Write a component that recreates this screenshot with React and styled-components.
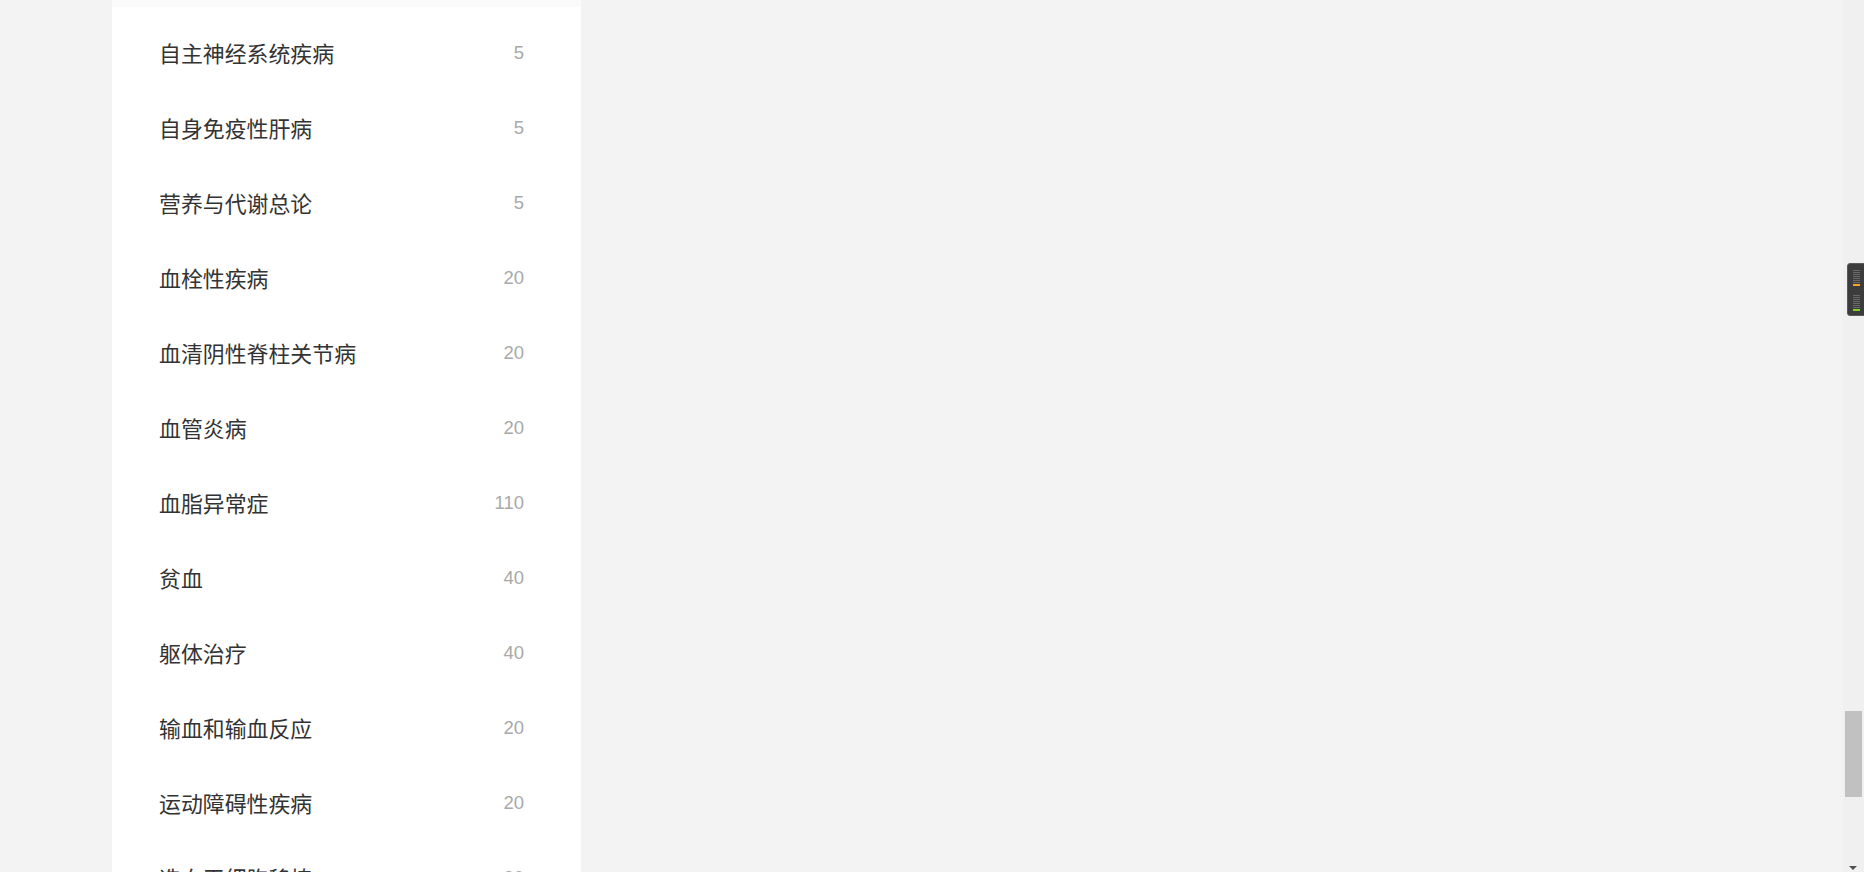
import React from 'react';
import styled, { createGlobalStyle } from 'styled-components';

const GlobalStyle = createGlobalStyle`
  html, body {
    margin: 0;
    padding: 0;
    height: 100%;
    overflow: hidden;
    background: #f3f3f3;
    font-family: "Liberation Sans", "Noto Sans CJK SC", sans-serif;
  }
`;

const Page = styled.div`
  position: relative;
  height: 872px;
  padding-left: 112px;
  display: flex;
`;

const Panel = styled.aside`
  width: 469px;
  height: 100%;
  background: linear-gradient(#fafafa 0, #fafafa 7px, #fff 7px);
  padding-top: 15px;
  box-sizing: border-box;
  overflow: hidden;
`;

const Row = styled.div`
  height: 75px;
  display: flex;
  align-items: center;
  justify-content: space-between;
  padding: 0 57px 0 47px;
  cursor: pointer;
`;

const Name = styled.span`
  font-family: "Noto Sans CJK SC", "Liberation Sans", sans-serif;
  font-size: 21.9px;
  color: #333;
`;

const Count = styled.span`
  font-family: "Liberation Sans", Arial, sans-serif;
  font-size: 18.5px;
  color: #a9a9a9;
  padding-top: 1px;
`;

const Scrollbar = styled.div`
  position: absolute;
  top: 0;
  right: 0;
  width: 21px;
  height: 100%;
  background: #f0f0f0;
`;

const Thumb = styled.div`
  position: absolute;
  left: 2px;
  right: 2px;
  top: 711px;
  height: 86px;
  background: #c1c1c1;
`;

const Arrow = styled.div`
  position: absolute;
  bottom: 2px;
  left: 6px;
  width: 0;
  height: 0;
  border-left: 4px solid transparent;
  border-right: 4px solid transparent;
  border-top: 4px solid #505050;
`;

const Widget = styled.div`
  position: absolute;
  top: 263px;
  right: -4px;
  width: 21px;
  height: 53px;
  background: #3c3c3c;
  border: 1px solid #5a5a5a;
  border-radius: 3px;
  box-sizing: border-box;
  padding: 6px 0 0 5px;
  display: flex;
  flex-direction: column;
  gap: 9px;
`;

const Meter = styled.div`
  display: flex;
  flex-direction: column;
  gap: 1px;
`;

const Tick = styled.div`
  width: 7px;
  height: ${p => (p.$color ? '2px' : '1px')};
  background: ${p => p.$color || '#6a6a6a'};
`;

const items = [
  ['自主神经系统疾病', 5],
  ['自身免疫性肝病', 5],
  ['营养与代谢总论', 5],
  ['血栓性疾病', 20],
  ['血清阴性脊柱关节病', 20],
  ['血管炎病', 20],
  ['血脂异常症', 110],
  ['贫血', 40],
  ['躯体治疗', 40],
  ['输血和输血反应', 20],
  ['运动障碍性疾病', 20],
  ['造血干细胞移植', 20],
];

function LevelMeter({ accent }) {
  return (
    <Meter>
      {[0, 1, 2, 3, 4, 5, 6].map(i => <Tick key={i} />)}
      <Tick $color={accent} />
    </Meter>
  );
}

export default function App() {
  return (
    <>
      <GlobalStyle />
      <Page>
        <Panel>
          {items.map(([name, count]) => (
            <Row key={name}>
              <Name>{name}</Name>
              <Count>{count}</Count>
            </Row>
          ))}
        </Panel>
        <Scrollbar>
          <Thumb />
          <Arrow />
        </Scrollbar>
        <Widget>
          <LevelMeter accent="#f5a623" />
          <LevelMeter accent="#7ed321" />
        </Widget>
      </Page>
    </>
  );
}
